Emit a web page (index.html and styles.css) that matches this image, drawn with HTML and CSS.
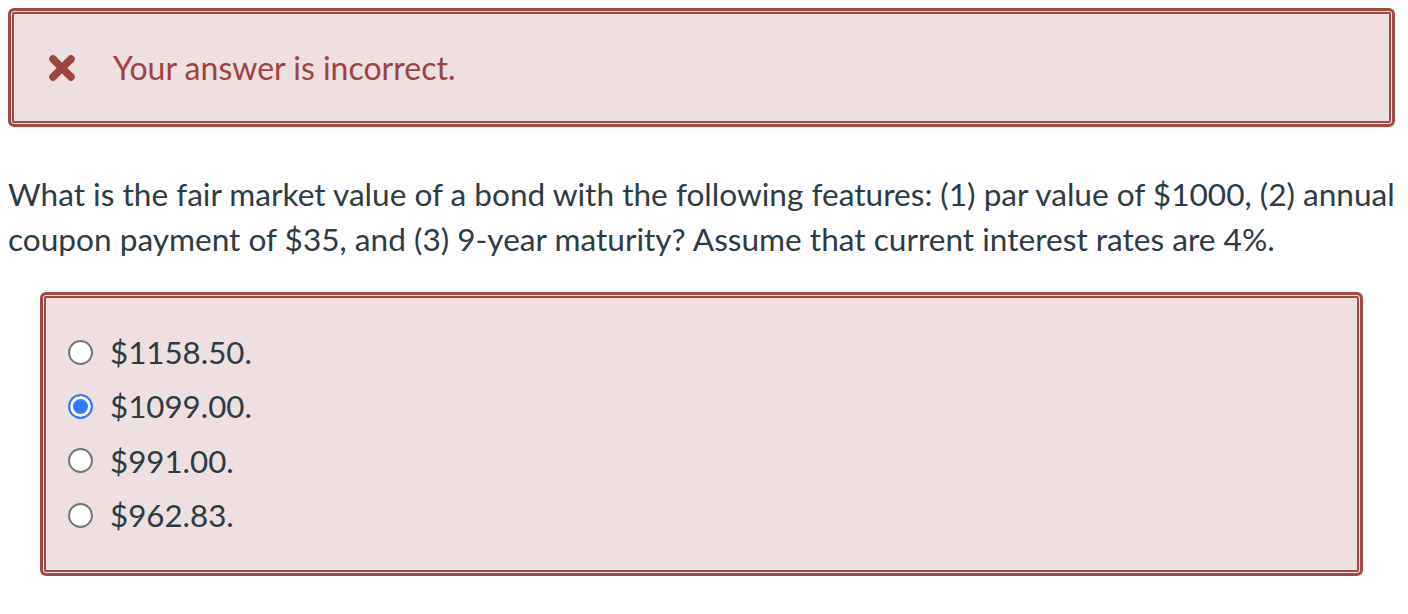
FILE: index.html
```html
<!DOCTYPE html>
<html lang="en">
<head>
  <meta charset="UTF-8">
  <title>Quiz result</title>
  <link rel="stylesheet" href="styles.css">
</head>
<body>

<div class="alert">
  <svg class="alert-icon" viewBox="0 0 28 28">
    <path d="M5 5 L23 23 M23 5 L5 23"/>
  </svg>
  <span class="alert-text">Your answer is incorrect.</span>
</div>

<p class="question">What is the fair market value of a bond with the following features: (1) par value of $1000, (2) annual coupon payment of $35, and (3) 9-year maturity? Assume that current interest rates are 4%.</p>

<div class="answers">
  <label class="answer"><input type="radio" name="ans" disabled><span>$1158.50.</span></label>
  <label class="answer"><input type="radio" name="ans" checked disabled><span>$1099.00.</span></label>
  <label class="answer"><input type="radio" name="ans" disabled><span>$991.00.</span></label>
  <label class="answer"><input type="radio" name="ans" disabled><span>$962.83.</span></label>
</div>

</body>
</html>
```

FILE: styles.css
```css
body {
  margin: 8px;
  background: #fff;
  font-family: Lato, "Open Sans", sans-serif;
  color: #2d3b45;
}

/* Incorrect banner */
.alert {
  display: flex;
  align-items: center;
  width: 1387px;
  height: 119px;
  box-sizing: border-box;
  padding-left: 37px;
  background: #eedfe0;
  border: 3px solid #a04a47;
  border-radius: 6px;
  box-shadow: inset 0 0 0 1px #f3e4e5, inset 0 0 0 3px #a04a47;
}

.alert-icon {
  width: 28px;
  height: 28px;
  margin-right: 37px;
}

.alert-icon path {
  fill: none;
  stroke: #a0423f;
  stroke-width: 7.5;
  stroke-linecap: round;
}

.alert-text {
  font-size: 32px;
  color: #a0423f;
}

.question {
  margin: 45px 0 0;
  font-size: 31.6px;
  line-height: 45px;
  width: 1400px;
}

/* Answer list */
.answers {
  margin: 30px 0 0 32px;
  width: 1323px;
  box-sizing: border-box;
  padding: 30px 25px 31px;
  background: #eedfe0;
  border: 3px solid #a04a47;
  border-radius: 6px;
  box-shadow: inset 0 0 0 1px #f3e4e5, inset 0 0 0 3px #a04a47;
}

.answer {
  display: flex;
  align-items: center;
  height: 54.3px;
  font-size: 31.3px;
}

.answer input {
  appearance: none;
  -webkit-appearance: none;
  width: 25px;
  height: 25px;
  margin: 0 17px 0 0;
  border: 2px solid #767676;
  border-radius: 50%;
  background: #fff;
  box-sizing: border-box;
}

.answer input:checked {
  border-color: #3478f6;
  background: #3478f6;
  box-shadow: inset 0 0 0 3px #fff;
}
```
